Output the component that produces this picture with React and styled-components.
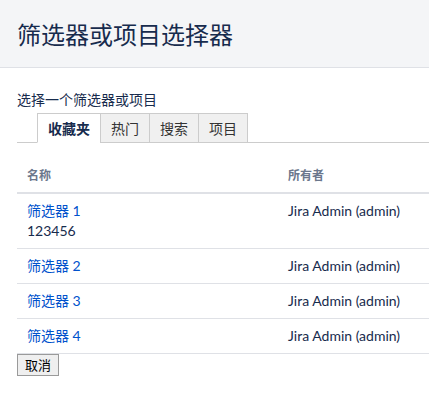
import React, { useState } from 'react';
import styled, { createGlobalStyle } from 'styled-components';

const GlobalStyle = createGlobalStyle`
  html, body {
    margin: 0;
    padding: 0;
    background: #fff;
  }
  body {
    font-family: "Noto Sans CJK SC", sans-serif;
    font-size: 14px;
    color: #172b4d;
  }
`;

const Dialog = styled.div`
  width: 429px;
  overflow: hidden;
`;

const Header = styled.header`
  height: 67px;
  display: flex;
  align-items: center;
  padding: 0 17px;
  background: #f4f5f7;
  border-bottom: 1px solid #dfe1e6;
`;

const Title = styled.h2`
  margin: 0;
  font-size: 24px;
  font-weight: 400;
  line-height: 30px;
  color: #172b4d;
`;

const Content = styled.div`
  padding: 21px 0 0 17px;
`;

const Hint = styled.p`
  margin: 0 0 4px;
  font-size: 14px;
  line-height: 20px;
`;

const TabList = styled.ul`
  list-style: none;
  margin: 0;
  padding: 0 0 0 20px;
  display: flex;
  border-bottom: 1px solid #cccccc;
`;

const Tab = styled.li`
  margin-bottom: -1px;
  margin-left: ${({ $first }) => ($first ? '0' : '-1px')};
  padding: 4px 10px;
  line-height: 20px;
  font-size: 14px;
  font-weight: ${({ $active }) => ($active ? 700 : 400)};
  color: ${({ $active }) => ($active ? '#172b4d' : '#333333')};
  background: ${({ $active }) => ($active ? '#ffffff' : '#f0f0f0')};
  border: 1px solid #cccccc;
  border-bottom-color: ${({ $active }) => ($active ? '#ffffff' : '#cccccc')};
  cursor: pointer;
`;

const Table = styled.table`
  margin-top: 15px;
  width: 412px;
  border-collapse: collapse;
  table-layout: fixed;
`;

const HeadCell = styled.th`
  width: ${({ $w }) => $w};
  text-align: left;
  padding: 7px 10px;
  line-height: 20px;
  font-size: 12px;
  font-weight: 600;
  color: #6b778c;
  border-bottom: 2px solid #dfe1e6;
`;

const Row = styled.tr`
  border-bottom: 1px solid #dfe1e6;
`;

const Cell = styled.td`
  padding: 7px 10px;
  line-height: 20px;
  font-size: 14px;
  font-family: "Lato", "Noto Sans CJK SC", sans-serif;
  vertical-align: top;
  white-space: nowrap;
  color: #172b4d;
`;

const FilterLink = styled.a`
  color: #0052cc;
  text-decoration: none;
`;

const Description = styled.div`
  color: #172b4d;
`;

const CancelButton = styled.button`
  height: 22px;
  padding: 0 7px;
  font-size: 13px;
  font-family: "Noto Sans CJK SC", sans-serif;
  line-height: 20px;
  color: #000;
  background: #efefef;
  border: 1px solid #9a9a9a;
  border-radius: 0;
`;

const tabs = ['收藏夹', '热门', '搜索', '项目'];

const filters = [
  { name: '筛选器 1', description: '123456', owner: 'Jira Admin (admin)' },
  { name: '筛选器 2', owner: 'Jira Admin (admin)' },
  { name: '筛选器 3', owner: 'Jira Admin (admin)' },
  { name: '筛选器 4', owner: 'Jira Admin (admin)' },
];

export default function App() {
  const [active, setActive] = useState(0);

  return (
    <Dialog>
      <GlobalStyle />
      <Header>
        <Title>筛选器或项目选择器</Title>
      </Header>
      <Content>
        <Hint>选择一个筛选器或项目</Hint>
        <TabList>
          {tabs.map((t, i) => (
            <Tab key={t} $first={i === 0} $active={i === active} onClick={() => setActive(i)}>
              {t}
            </Tab>
          ))}
        </TabList>
        <Table>
          <thead>
            <tr>
              <HeadCell $w="241px">名称</HeadCell>
              <HeadCell>所有者</HeadCell>
            </tr>
          </thead>
          <tbody>
            {filters.map((f) => (
              <Row key={f.name}>
                <Cell>
                  <FilterLink href="#">{f.name}</FilterLink>
                  {f.description && <Description>{f.description}</Description>}
                </Cell>
                <Cell>{f.owner}</Cell>
              </Row>
            ))}
          </tbody>
        </Table>
        <CancelButton>取消</CancelButton>
      </Content>
    </Dialog>
  );
}
